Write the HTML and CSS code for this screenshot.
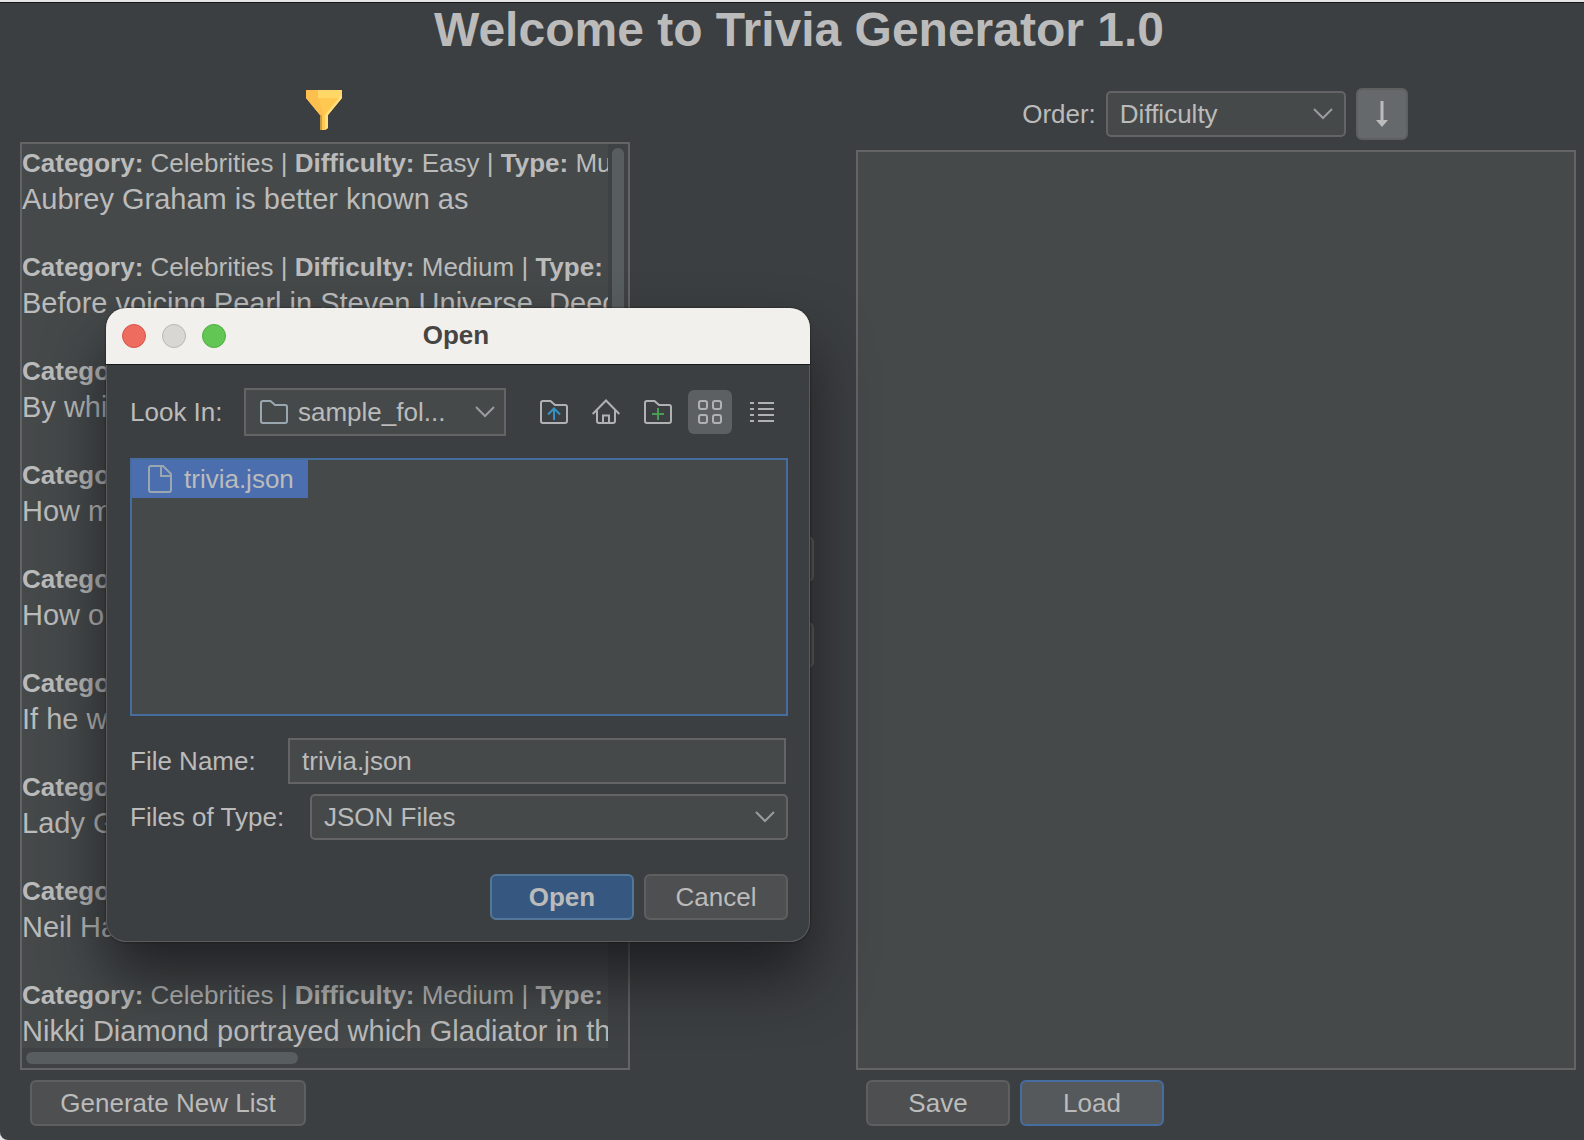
FILE: index.html
```html
<!DOCTYPE html>
<html lang="en">
<head>
<meta charset="utf-8">
<title>Trivia Generator</title>
<link rel="stylesheet" href="styles.css">
</head>
<body>
<div class="window">
  <h1 class="title">Welcome to Trivia Generator 1.0</h1>
  <main class="columns">
    <section class="column">
      <div class="toolbar toolbar-filter">
        <button class="filter" type="button" aria-label="Filter">
          <svg width="36" height="40" viewBox="0 0 36 40">
            <path d="M0 0h36v8L22 25v13l-3 2h-5V25L0 8z" fill="#ffc850"/>
            <path d="M0 0h12v8l6 17h-4L0 8z" fill="#fdbf4d"/>
            <path d="M12 0h24v8H12z" fill="#ffd766"/>
            <path d="M36 4v4L22 25v13l-3 2V25z" fill="#ffe07c"/>
            <path d="M15 25v15" stroke="#c59c48" stroke-width="2"/>
          </svg>
        </button>
      </div>
      <div class="panel scroll-panel">
        <ul class="questions">
          <li><p class="meta"><b>Category:</b> Celebrities | <b>Difficulty:</b> Easy | <b>Type:</b> Multiple</p><p class="question">Aubrey Graham is better known as</p></li>
          <li><p class="meta"><b>Category:</b> Celebrities | <b>Difficulty:</b> Medium | <b>Type:</b> Multiple</p><p class="question">Before voicing Pearl in Steven Universe, Deedee Magno</p></li>
          <li><p class="meta"><b>Category:</b> Celebrities</p><p class="question">By which</p></li>
          <li><p class="meta"><b>Category:</b> Celebrities</p><p class="question">How many</p></li>
          <li><p class="meta"><b>Category:</b> Celebrities</p><p class="question">How old</p></li>
          <li><p class="meta"><b>Category:</b> Celebrities</p><p class="question">If he was</p></li>
          <li><p class="meta"><b>Category:</b> Celebrities</p><p class="question">Lady Gaga</p></li>
          <li><p class="meta"><b>Category:</b> Celebrities</p><p class="question">Neil Ham</p></li>
          <li><p class="meta"><b>Category:</b> Celebrities | <b>Difficulty:</b> Medium | <b>Type:</b> Multiple</p><p class="question">Nikki Diamond portrayed which Gladiator in the series</p></li>
        </ul>
        <div class="track-y"><div class="thumb-y"></div></div>
        <div class="track-x"><div class="thumb-x"></div></div>
      </div>
      <div class="actions">
        <button class="button button-wide" type="button">Generate New List</button>
      </div>
    </section>
    <div class="transfer">
      <button class="button" type="button" aria-label="Add"></button>
      <button class="button" type="button" aria-label="Remove"></button>
    </div>
    <section class="column">
      <div class="toolbar toolbar-order">
        <label for="order">Order:</label>
        <span class="select order-select">
          <select id="order"><option>Difficulty</option></select>
          <svg class="chevron" width="20" height="12" viewBox="0 0 20 12"><path d="M1 1l9 9 9-9"/></svg>
        </span>
        <button class="direction" type="button" aria-label="Descending">
          <svg width="14" height="28" viewBox="0 0 14 28"><path d="M5.500 1h3v19H13l-6 7-6-7h4.500z" fill="#bbb"/></svg>
        </button>
      </div>
      <div class="panel"></div>
      <div class="actions">
        <button class="button" type="button">Save</button>
        <button class="button button-focus" type="button">Load</button>
      </div>
    </section>
  </main>
</div>

<div class="dialog" role="dialog" aria-labelledby="dialog-title">
  <header class="titlebar">
    <span class="lights"><i class="light red"></i><i class="light gray"></i><i class="light green"></i></span>
    <h2 id="dialog-title">Open</h2>
  </header>
  <form class="dialog-body">
    <div class="look-row">
      <label for="look">Look In:</label>
      <span class="select look-select">
        <svg class="select-icon" width="28" height="24" viewBox="0 0 28 24"><path class="line cool" d="M3 1h7.500l4.500 4h10q2 0 2 2v14q0 2-2 2H3q-2 0-2-2V3q0-2 2-2z"/></svg>
        <select id="look"><option>sample_fol...</option></select>
        <svg class="chevron" width="20" height="12" viewBox="0 0 20 12"><path d="M1 1l9 9 9-9"/></svg>
      </span>
      <div class="tools">
        <button class="tool" type="button" aria-label="Up one level">
          <svg width="28" height="28" viewBox="0 0 28 28"><path class="line" d="M3 3h7.500l4.500 4h10q2 0 2 2v14q0 2-2 2H3q-2 0-2-2V5q0-2 2-2z"/><path class="line blue" d="M14 22V11M8 16.500l6-6 6 6"/></svg>
        </button>
        <button class="tool" type="button" aria-label="Home">
          <svg width="28" height="28" viewBox="0 0 28 28"><path class="line" d="M.700 16L14 2.500 27.300 16M5 12.500V23q0 2 2 2h14q2 0 2-2V12.500M11 25v-7.500h6V25"/></svg>
        </button>
        <button class="tool" type="button" aria-label="New folder">
          <svg width="28" height="28" viewBox="0 0 28 28"><path class="line" d="M3 3h7.500l4.500 4h10q2 0 2 2v14q0 2-2 2H3q-2 0-2-2V5q0-2 2-2z"/><path class="line leaf" d="M14 10v12M8 16h12"/></svg>
        </button>
        <button class="tool tool-on" type="button" aria-label="Tiles">
          <svg width="28" height="28" viewBox="0 0 28 28"><g class="line"><rect x="3" y="3" width="8" height="8" rx="2"/><rect x="17" y="3" width="8" height="8" rx="2"/><rect x="3" y="17" width="8" height="8" rx="2"/><rect x="17" y="17" width="8" height="8" rx="2"/></g></svg>
        </button>
        <button class="tool" type="button" aria-label="Details">
          <svg width="28" height="28" viewBox="0 0 28 28"><path class="line" d="M2 5h4M10 5h16M2 11h4M10 11h16M2 17h4M10 17h16M2 23h4M10 23h16"/></svg>
        </button>
      </div>
    </div>
    <ul class="files">
      <li class="file">
        <svg width="24" height="28" viewBox="0 0 24 28"><path class="line cool" d="M3 1h12l8 8v16q0 2-2 2H3q-2 0-2-2V3q0-2 2-2zM13 1v10h10"/></svg>
        trivia.json
      </li>
    </ul>
    <div class="field name-field">
      <label for="name">File Name:</label>
      <input id="name" type="text" value="trivia.json">
    </div>
    <div class="field type-field">
      <label for="type">Files of Type:</label>
      <span class="select">
        <select id="type"><option>JSON Files</option></select>
        <svg class="chevron" width="20" height="12" viewBox="0 0 20 12"><path d="M1 1l9 9 9-9"/></svg>
      </span>
    </div>
    <div class="dialog-actions">
      <button class="button button-default" type="button">Open</button>
      <button class="button" type="button">Cancel</button>
    </div>
  </form>
</div>
</body>
</html>
```

FILE: styles.css
```css
* { box-sizing: border-box; }

body {
  margin: 0;
  background: #e4e4e6;
  color: #bbb;
  font: 26px/30px "Liberation Sans", Arial, sans-serif;
}

h1, h2, p, ul { margin: 0; padding: 0; }
ul { list-style: none; }
svg { display: block; flex: none; }
button, select, input { font: inherit; color: inherit; margin: 0; }

.window {
  display: flex;
  flex-direction: column;
  min-height: 100vh;
  padding-bottom: 14px;
  border-top: 2px solid #e4e4e6;
  border-bottom-left-radius: 8px;
  background: #3c3f41;
  box-shadow: inset 0 1px #161718;
}

.title {
  padding: 0 0 12px 14px;
  font-size: 48px;
  line-height: 56px;
  text-align: center;
}

.columns {
  flex: 1;
  display: grid;
  grid-template-columns: 610fr 226px 720fr;
  padding: 0 8px 0 20px;
}

.column {
  display: flex;
  flex-direction: column;
  min-width: 0;
}

.toolbar {
  display: flex;
  justify-content: center;
  align-items: center;
}

.toolbar-filter { height: 72px; padding: 8px 2px 0 0; }
.toolbar-order { height: 80px; gap: 10px; padding: 8px 2px 0 0; }

.filter { padding: 0; border: 0; background: none; }

.panel {
  flex: 1;
  border: 2px solid #646464;
  background: #45494a;
}

.scroll-panel {
  display: grid;
  grid-template: minmax(0, 1fr) 20px / minmax(0, 1fr) 20px;
  background: #3f4244;
}

.questions {
  padding-top: 1px;
  overflow: hidden;
  background: #45494a;
  white-space: nowrap;
}

.questions li { margin-bottom: 32px; }
.questions li:last-child { margin-bottom: -2px; }
.meta { line-height: 36px; }
.question { font-size: 29px; line-height: 36px; }

.track-y { padding: 4px; }
.thumb-y { height: 560px; border-radius: 6px; background: #585d60; }
.track-x { grid-column: 1 / -1; padding: 4px; }
.thumb-x { width: 272px; height: 12px; border-radius: 6px; background: #585d60; }

.actions { display: flex; gap: 10px; padding: 10px 10px 0; }

.button {
  width: 144px;
  height: 46px;
  padding: 0;
  border: 2px solid #5e6060;
  border-radius: 6px;
  background: #4e4f51;
}

.button-wide { width: 276px; }
.button-focus { border-color: #466d9f; background: #55595c; }
.button-default { border-color: #537699; background: #365880; font-weight: bold; }

.transfer {
  display: flex;
  flex-direction: column;
  align-items: center;
  gap: 40px;
  padding: 466px 2px 0 0;
}

.select { position: relative; display: flex; }

select, input {
  appearance: none;
  width: 100%;
  height: 46px;
  padding: 0 12px;
  border: 2px solid #646464;
  border-radius: 5px;
  background: #45494a;
  outline: 0;
}

input { border-radius: 0; }

.chevron {
  position: absolute;
  top: 50%;
  right: 13px;
  margin-top: -6px;
  fill: none;
  stroke: #9a9c9e;
  stroke-width: 2;
  pointer-events: none;
}

.order-select { width: 240px; }

.direction {
  display: grid;
  place-items: center;
  width: 52px;
  height: 52px;
  padding: 0;
  border: 2px solid #5e6060;
  border-radius: 6px;
  background: #66696b;
}

.dialog {
  position: absolute;
  top: 308px;
  left: 106px;
  width: 704px;
  border-radius: 20px;
  background: #3c3f41;
  box-shadow: inset 0 0 0 1px #5a5c5e, 0 0 2px #111, 0 36px 60px rgba(20, 20, 22, .72);
}

.titlebar {
  position: relative;
  display: grid;
  place-items: center;
  height: 57px;
  padding: 0 4px 2px 0;
  border-bottom: 1px solid #17191a;
  border-radius: 20px 20px 0 0;
  background: #f1f0ec;
  color: #464543;
}

.titlebar h2 { font-size: 26px; line-height: 30px; }
.lights { position: absolute; top: 16px; left: 16px; display: flex; gap: 16px; }
.light { width: 24px; height: 24px; border: 1px solid; border-radius: 50%; }
.red { border-color: #d8554a; background: #ed6b5f; }
.gray { border-color: #b9b8b5; background: #d8d7d4; }
.green { border-color: #50ad41; background: #62c655; }

.dialog-body { display: flex; flex-direction: column; padding: 23px 22px 22px 24px; }

.look-row { display: flex; align-items: center; }
.look-row label { width: 114px; }
.look-select { width: 262px; }
.look-select select { height: 48px; padding-left: 52px; border-radius: 0; }
.look-select .chevron { right: 11px; }
.select-icon { position: absolute; top: 12px; left: 16px; pointer-events: none; }

.tools { display: flex; gap: 8px; margin-left: 26px; }
.tool {
  display: grid;
  place-items: center;
  width: 44px;
  height: 44px;
  padding: 0;
  border: 0;
  border-radius: 6px;
  background: none;
}
.tool-on { background: #5c6063; }

.line { fill: none; stroke: #afb1b3; stroke-width: 2; }
.cool { stroke: #9aa7b0; }
.blue { stroke: #3592c4; }
.leaf { stroke: #499c54; }

.files {
  display: flex;
  align-items: flex-start;
  height: 258px;
  margin: 22px 0;
  border: 2px solid #466d9f;
  background: #45494a;
}

.file {
  display: flex;
  align-items: center;
  gap: 12px;
  height: 38px;
  padding: 0 14px 0 16px;
  background: #4b6eaf;
}

.field { display: flex; align-items: center; }
.name-field { padding-right: 2px; }
.name-field label { flex: 0 0 158px; }
.type-field { margin-top: 10px; }
.type-field label { flex: 0 0 180px; }
.field .select { flex: 1; }

.dialog-actions { display: flex; justify-content: flex-end; gap: 10px; margin-top: 34px; }
```
